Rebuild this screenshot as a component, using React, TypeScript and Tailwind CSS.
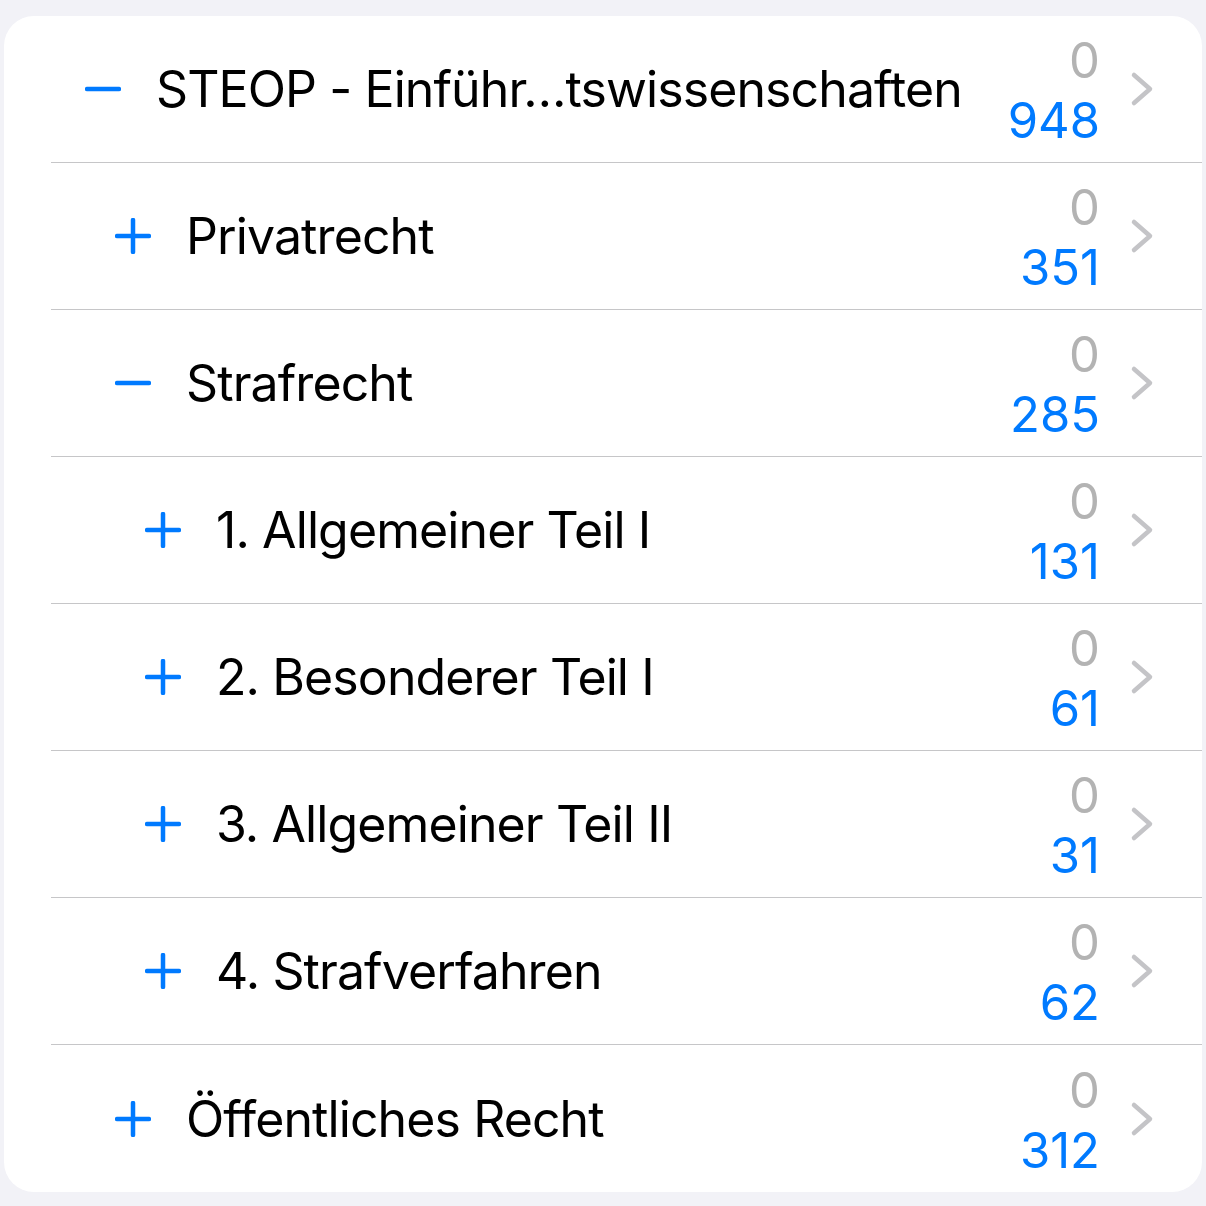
const rows = [
    { level: 0, open: true, title: "STEOP - Einführ…tswissenschaften", due: 0, total: 948 },
    { level: 1, open: false, title: "Privatrecht", due: 0, total: 351 },
    { level: 1, open: true, title: "Strafrecht", due: 0, total: 285 },
    { level: 2, open: false, title: "1. Allgemeiner Teil I", due: 0, total: 131 },
    { level: 2, open: false, title: "2. Besonderer Teil I", due: 0, total: 61 },
    { level: 2, open: false, title: "3. Allgemeiner Teil II", due: 0, total: 31 },
    { level: 2, open: false, title: "4. Strafverfahren", due: 0, total: 62 },
    { level: 1, open: false, title: "Öffentliches Recht", due: 0, total: 312 },
];

const indent = ["pl-[34px]", "pl-[64px]", "pl-[94px]"];

const Toggle = ({ open }: { open: boolean }) => (
    <svg width="36" height="36" viewBox="0 0 36 36" className="shrink-0">
        <path d="M2 18H34" stroke="#007aff" strokeWidth="4.5" strokeLinecap="round" />
        {!open && <path d="M18 2V34" stroke="#007aff" strokeWidth="4.5" strokeLinecap="round" />}
    </svg>
);

const Chevron = () => (
    <svg width="24" height="36" viewBox="0 0 24 36" className="shrink-0">
        <path d="M4 4L20 18L4 32" fill="none" stroke="#c4c4c7" strokeWidth="4.5" strokeLinecap="round" strokeLinejoin="round" />
    </svg>
);

const App = () => {
    return (
        <div className="min-h-[1206px] bg-[#f2f2f7] pt-4 px-1 font-['Inter','Roboto',sans-serif]">
            <div className="bg-white rounded-[30px] overflow-hidden">
                {rows.map((row, i) => (
                    <div key={i} className="pl-[47px]">
                        <div className={`flex items-center h-[147px] pr-[48px] ${i < rows.length - 1 ? "border-b border-[#c6c6c8]" : ""} ${indent[row.level]}`}>
                            <Toggle open={row.open} />
                            <p className="ml-[35px] flex-1 text-[50px] leading-none text-black whitespace-nowrap tracking-[-0.9px]">{row.title}</p>
                            <div className="flex flex-col items-end pt-[4px] text-[49px] leading-[60px] mr-[30px]">
                                <span className="text-[#b3b3b3]">{row.due}</span>
                                <span className="text-[#007aff]">{row.total}</span>
                            </div>
                            <Chevron />
                        </div>
                    </div>
                ))}
            </div>
        </div>
    );
};

export default App;
